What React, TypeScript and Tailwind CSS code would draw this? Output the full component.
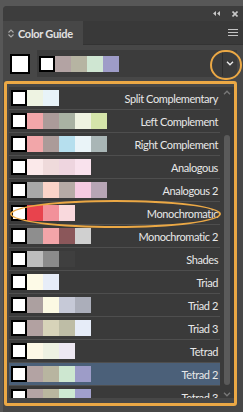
import React from "react";

type Row = { name: string; colors: string[]; selected?: boolean };

const rows: Row[] = [
  { name: "Split Complementary", colors: ["#eef3e2", "#e8f3f8"] },
  { name: "Left Complement", colors: ["#f2a6a9", "#ab9b99", "#a9b2a3", "#eff3e1", "#d5e5aa"] },
  { name: "Right Complement", colors: ["#f2a6a9", "#ab9b99", "#b6dfee", "#eaf4f8", "#a9b6b6"] },
  { name: "Analogous", colors: ["#fbe9ea", "#efdadb", "#eed5df", "#f9e2ed"] },
  { name: "Analogous 2", colors: ["#a9a9a9", "#fbd4c9", "#b6aba6", "#f5cae1", "#b7a5b5"] },
  { name: "Monochromatic", colors: ["#e8434d", "#f2919a", "#f9d9dd"] },
  { name: "Monochromatic 2", colors: ["#8e8e8e", "#f3a5a9", "#8b575a", "#d0d0d0"] },
  { name: "Shades", colors: ["#bdbdbd", "#8b8b8b", "#3f3f3f"] },
  { name: "Triad", colors: ["#fdfae7", "#e7edf8"] },
  { name: "Triad 2", colors: ["#aca0a0", "#fcf9e3", "#c6c9d7", "#abaeba"] },
  { name: "Triad 3", colors: ["#b2a1a1", "#d7d3b9", "#bebda6", "#e6ecf8"] },
  { name: "Tetrad", colors: ["#fdf8e6", "#eef1e2", "#ede8f2"] },
  { name: "Tetrad 2", colors: ["#b3a3a3", "#b8b5a0", "#cde7d0", "#9d9cc8"], selected: true },
  { name: "Tetrad 3", colors: ["#b4a4a4", "#bab79f", "#ceead3", "#a1a0cd"] },
];

const current = ["#b3a3a3", "#b6b4a2", "#cfe6d2", "#9e9cc8"];

const Chevron = ({ up = false, className = "" }: { up?: boolean; className?: string }) => (
  <svg width="8" height="5" viewBox="0 0 8 5" className={className}>
    <path
      d={up ? "M1 4.2 L4 1.2 L7 4.2" : "M1 0.8 L4 3.8 L7 0.8"}
      fill="none"
      stroke="currentColor"
      strokeWidth="1.4"
    />
  </svg>
);

export default function App() {
  return (
    <div className="relative w-[243px] h-[412px] overflow-hidden bg-[#575757] pt-[6px] pl-[3px] font-['Lato',sans-serif]">
      <div className="h-full bg-[#474747] rounded-tl-[4px] flex flex-col overflow-hidden">
        {/* title bar */}
        <div className="h-[15px] bg-[#3d3d3d] flex items-center justify-end pr-[5px] gap-[12px] text-[#c8c8c8]">
          <svg width="7" height="5" viewBox="0 0 7 5">
            <path d="M3 0 L0 2.5 L3 5 Z M7 0 L4 2.5 L7 5 Z" fill="currentColor" />
          </svg>
          <svg width="6" height="6" viewBox="0 0 6 6">
            <path d="M0.5 0.5 L5.5 5.5 M5.5 0.5 L0.5 5.5" stroke="currentColor" strokeWidth="1.6" />
          </svg>
        </div>

        {/* tab row */}
        <div className="h-[24px] flex bg-[#393939] border-b border-[#333]">
          <div className="w-[80px] h-[24px] bg-[#474747] flex items-center pl-[5px] gap-[4px]">
            <svg width="6" height="9" viewBox="0 0 6 9" className="text-[#a8a8a8]">
              <path d="M0.5 3.5 L3 1 L5.5 3.5 M0.5 5.5 L3 8 L5.5 5.5" fill="none" stroke="currentColor" strokeWidth="1.1" />
            </svg>
            <span className="text-[11px] font-bold tracking-[-0.3px] text-[#e2e2e2] leading-none">Color Guide</span>
          </div>
          <div className="ml-auto pr-[5px] flex flex-col justify-center gap-[2.3px]">
            <div className="w-[10px] h-px bg-[#c4c4c4]" />
            <div className="w-[10px] h-px bg-[#c4c4c4]" />
            <div className="w-[10px] h-px bg-[#c4c4c4]" />
          </div>
        </div>

        {/* current harmony */}
        <div className="mt-[5px] h-[27px] flex items-center pl-[7px] pr-[6px] gap-[7px]">
          <div className="w-[20px] h-[20px] border-2 border-black bg-white" />
          <div className="flex-1 h-[27px] bg-[#3c3c3c] flex items-center pl-[2px]">
            <div className="w-4 h-4 border-2 border-black bg-white" />
            {current.map((c) => (
              <div key={c} className="w-4 h-4" style={{ backgroundColor: c }} />
            ))}
            <div className="ml-auto w-[15px] h-[25px] border-l border-[#2e2e2e] flex items-center justify-center text-[#e8e8e8]">
              <Chevron />
            </div>
          </div>
        </div>

        {/* harmony list */}
        <div className="mt-[4px] ml-[1px] mr-[6px] h-[325px] border-[3px] border-[#eba845] rounded-[3px] bg-[#474747] pt-[3px] pl-[2px]">
          <div className="h-[311px] bg-[#3a3a3a] flex">
            <div className="w-[211px] overflow-hidden">
              {rows.map((r) => (
                <div
                  key={r.name}
                  className={`h-[23px] border-b border-[#4e4e4e] flex items-center pl-[2px] pr-[2px] ${
                    r.selected ? "bg-[#4b6079]" : ""
                  }`}
                >
                  <div className="w-4 h-4 border-2 border-black bg-white" />
                  {r.colors.map((c, i) => (
                    <div key={i} className="w-4 h-4" style={{ backgroundColor: c }} />
                  ))}
                  <span className="ml-auto text-[11px] tracking-[-0.4px] text-[#e8e8e8] leading-none whitespace-nowrap">
                    {r.name}
                  </span>
                </div>
              ))}
            </div>
            <div className="w-[14px] flex flex-col items-center pt-[3px] text-[#777]">
              <Chevron up />
              <div className="mt-[40px] w-[6px] h-[250px] rounded-full bg-[#5a5a5a]" />
              <Chevron className="mt-[7px]" />
            </div>
          </div>
        </div>
      </div>

      {/* annotation circles */}
      <div className="absolute left-[210px] top-[50px] w-[32px] h-[30px] rounded-full border-2 border-[#eba845]" />
      <div className="absolute left-[10px] top-[200px] w-[211px] h-[28px] rounded-[50%] border-2 border-[#eba845]" />
    </div>
  );
}
